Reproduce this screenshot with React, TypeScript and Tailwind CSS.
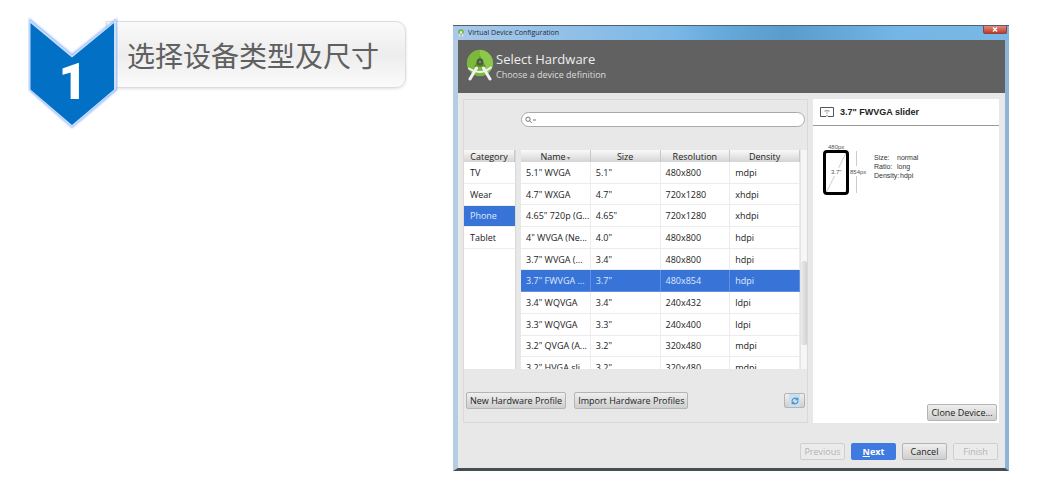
import type { ReactNode } from "react";

const categories = ["TV", "Wear", "Phone", "Tablet"];

const devices = [
  ['5.1" WVGA', '5.1"', "480x800", "mdpi"],
  ['4.7" WXGA', '4.7"', "720x1280", "xhdpi"],
  ['4.65" 720p (G...', '4.65"', "720x1280", "xhdpi"],
  ['4" WVGA (Ne...', '4.0"', "480x800", "hdpi"],
  ['3.7" WVGA (...', '3.4"', "480x800", "hdpi"],
  ['3.7" FWVGA ...', '3.7"', "480x854", "hdpi"],
  ['3.4" WQVGA', '3.4"', "240x432", "ldpi"],
  ['3.3" WQVGA', '3.3"', "240x400", "ldpi"],
  ['3.2" QVGA (A...', '3.2"', "320x480", "mdpi"],
  ['3.2" HVGA sli...', '3.2"', "320x480", "mdpi"],
];

const columns = ["Name", "Size", "Resolution", "Density"];

function PushButton({ children, className = "px-[3px]", disabled = false }: { children: ReactNode; className?: string; disabled?: boolean }) {
  const tone = disabled
    ? "border-[#cfcfcf] bg-[#ebebeb] text-[#b4b4b4]"
    : "border-[#b4b4b4] bg-linear-to-b from-[#efefef] to-[#cfcfcf] text-[#222]";
  return (
    <button type="button" disabled={disabled} className={`flex h-[17px] items-center justify-center rounded-[2px] border whitespace-nowrap ${tone} ${className}`}>
      {children}
    </button>
  );
}

function StepBadge() {
  return (
    <div className="relative z-10 w-[90px] shrink-0">
      <svg viewBox="0 0 90 113" className="block w-full" aria-hidden="true">
        <defs>
          <filter id="glow" x="-10%" y="-10%" width="120%" height="120%">
            <feGaussianBlur stdDeviation="0.8" />
          </filter>
        </defs>
        <path d="M1 2 44 38 89 2V74L44 112 1 74Z" fill="#8db4f5" filter="url(#glow)" />
        <path d="M1.500 4 44 39.500 88 4V73L44 111 1.500 73Z" fill="#cfe0ff" />
        <path d="M2.500 7 44 41.500 86 7V73.500L44 109 2.500 73.500Z" fill="#0270c4" />
      </svg>
      <span className="absolute inset-x-0 top-[47px] text-center font-['Liberation_Sans_Narrow',Roboto,sans-serif] text-[50px] leading-[38px] font-black text-white">1</span>
    </div>
  );
}

function StudioLogo() {
  return (
    <svg viewBox="0 0 28 32" className="h-8 w-7 shrink-0" aria-hidden="true">
      <circle cx="14" cy="14" r="13.200" fill="#7cb83c" />
      <path d="M14 1a13 13 0 0 1 8 23L14 14Z" fill="#8cc84b" />
      <path d="M14 7 8 18h12Z" fill="#5c8f2c" />
      <circle cx="14" cy="13" r="3.400" fill="#4f5a48" />
      <circle cx="14" cy="13" r="1" fill="#7cb83c" />
      <path d="M10.500 19 4 30M17.500 19 24 30" stroke="#f2f2f2" strokeWidth="3" strokeLinecap="round" />
      <path d="M3 19.500Q14 27 25 18.500" stroke="#f2f2f2" strokeWidth="2" fill="none" strokeLinecap="round" />
    </svg>
  );
}

function DeviceDiagram() {
  return (
    <svg viewBox="0 0 46 54" className="h-[54px] w-[46px] shrink-0" fontFamily="Liberation Sans, Arial, sans-serif" fontSize="6" fill="#555">
      <path d="M3 51 24 9M34.500 7V22M34.500 32V49" stroke="#ccc" strokeWidth="1" fill="none" />
      <rect x="2.500" y="7.500" width="23" height="42" rx="2.500" fill="none" stroke="#000" strokeWidth="3" />
      <rect x="9" y="24" width="10" height="8" fill="#fff" />
      <text x="6" y="4.500">480px</text>
      <text x="9" y="30">3.7"</text>
      <text x="28" y="30">854px</text>
    </svg>
  );
}

function HeaderCell({ children }: { children?: ReactNode }) {
  return (
    <th scope="col" className="h-3 border-r border-[#c8c8c8] bg-linear-to-b from-[#fafafa] to-[#d4d4d4] p-0 text-center font-normal">
      {children}
    </th>
  );
}

function CategoryTable() {
  return (
    <div className="h-[219px] w-[52px] shrink-0 overflow-hidden border-r border-[#d8d8d8] bg-white">
      <table className="h-[99px] w-full table-fixed border-separate border-spacing-0 leading-[11px]">
        <thead>
          <tr>
            <HeaderCell>Category</HeaderCell>
          </tr>
        </thead>
        <tbody>
          {categories.map((name) => (
            <tr key={name} className={name === "Phone" ? "bg-[#3874d8] text-[#dfe9fb]" : ""}>
              <td className="border-b border-[#eee] p-0 pl-1.5">{name}</td>
            </tr>
          ))}
        </tbody>
      </table>
    </div>
  );
}

function DeviceTable() {
  return (
    <div className="flex h-[219px] min-w-0 flex-1 overflow-hidden bg-white">
      <div className="min-w-0 flex-1">
        <table className="h-[229px] w-full table-fixed border-separate border-spacing-0 leading-[11px]">
          <thead>
            <tr>
              {columns.map((name) => (
                <HeaderCell key={name}>
                  {name}
                  {name === "Name" && <span className="text-[6px] leading-none text-[#777]"> ▾</span>}
                </HeaderCell>
              ))}
            </tr>
          </thead>
          <tbody>
            {devices.map((row, index) => (
              <tr key={row[0]} className={index === 5 ? "bg-[#3874d8] text-[#dfe9fb]" : ""}>
                {row.map((value, column) => (
                  <td key={column} className={`border-r border-b p-0 pl-[5px] whitespace-nowrap ${index === 5 ? "border-[#5f90e2]" : "border-[#ececec]"}`}>
                    {value}
                  </td>
                ))}
              </tr>
            ))}
          </tbody>
        </table>
      </div>
      <div className="w-[7px] shrink-0 border-l border-[#e4e4e4] bg-[#f6f6f6] pt-[111px]">
        <div className="h-[84px] rounded-[2px] bg-linear-to-r from-[#ececec] to-[#d2d2d2]" />
      </div>
    </div>
  );
}

function HardwarePanel() {
  return (
    <section className="flex min-w-0 flex-1 flex-col border border-[#d9d9d9]">
      <div className="pt-3 pr-0.5 pb-[23px] pl-[57px]">
        <label className="flex h-[15px] items-center rounded-full border border-[#aaa] bg-white px-[3px]">
          <svg viewBox="0 0 12 8" className="h-2 w-3 shrink-0" fill="none" stroke="#777" aria-hidden="true">
            <circle cx="3" cy="3.200" r="2.200" />
            <path d="m4.700 4.900 2 2.100M8 4h3" />
          </svg>
          <input type="search" aria-label="Search devices" className="min-w-0 flex-1 bg-transparent outline-none" />
        </label>
      </div>
      <div className="flex gap-[5px]">
        <CategoryTable />
        <DeviceTable />
      </div>
      <div className="mt-[23px] mb-[13px] flex items-center gap-2 pr-0.5 pl-0.5">
        <PushButton>New Hardware Profile</PushButton>
        <PushButton>Import Hardware Profiles</PushButton>
        <button type="button" aria-label="Refresh" className="ml-auto flex h-[15px] w-[21px] items-center justify-center rounded-[2px] border border-[#b4b4b4] bg-linear-to-b from-[#efefef] to-[#cfcfcf]">
          <span className="flex h-[13px] w-[11px] items-center justify-center bg-[#c9dfef]">
            <svg viewBox="0 0 10 10" className="h-2 w-2" fill="none" stroke="#4d8fc0" strokeWidth="1.400" aria-hidden="true">
              <path d="M1.500 5.500A3.500 3.500 0 0 1 7.500 2.500M8.500 4.500A3.500 3.500 0 0 1 2.500 7.500M8.500.8V3.500H5.800M1.500 9.200V6.500H4.200" />
            </svg>
          </span>
        </button>
      </div>
    </section>
  );
}

function DetailPanel() {
  return (
    <aside className="flex w-[186px] shrink-0 flex-col bg-white font-['Liberation_Sans',Arial,sans-serif] text-[#222]">
      <div className="flex h-[27px] items-center gap-1.5 border-b border-[#999] pl-[7px]">
        <svg viewBox="0 0 14 10" className="h-2.5 w-3.5" fill="none" stroke="#555" aria-hidden="true">
          <path d="M.5.5h13v9H8L7 8.500 6 9.500H.5Z" />
          <path d="M5 5V3.500h4V5M7 3.500V7" stroke="#aaa" />
        </svg>
        <h2 className="text-[9px] leading-3 font-bold text-[#222]">3.7" FWVGA slider</h2>
      </div>
      <div className="mt-[18px] flex gap-1.5 pl-[9px]">
        <DeviceDiagram />
        <dl className="mt-[9px] grid auto-rows-[9px] grid-cols-[23px_auto] content-start text-[7px] leading-[9px] text-[#333]">
          <dt>Size:</dt>
          <dd>normal</dd>
          <dt>Ratio:</dt>
          <dd>long</dd>
          <dt>Density:</dt>
          <dd className="pl-[3px]">hdpi</dd>
        </dl>
      </div>
      <div className="mt-auto flex justify-end pr-0.5 pb-0.5 font-['Open_Sans',sans-serif]">
        <PushButton className="w-[70px]">Clone Device...</PushButton>
      </div>
    </aside>
  );
}

function ConfigurationWindow() {
  return (
    <main className="mt-[25px] mr-[33px] min-w-0 flex-1 font-['Open_Sans','Noto_Sans',sans-serif] text-[9px] leading-3 text-[#222]">
      <div className="border-t border-[#52606c] bg-linear-to-r from-[#a9c9e8] via-[#6db3e6] to-[#79b8e6]">
        <div className="flex h-[14px] items-start justify-between bg-linear-to-r from-transparent from-40% via-[#5a9ccb] via-60% to-transparent to-80% pr-0.5 pl-[5px]">
          <div className="flex h-[14px] items-center gap-1 text-[7px] text-[#1d2c3c]">
            <svg viewBox="0 0 6 8" className="h-2 w-1.5" aria-hidden="true">
              <circle cx="3" cy="3" r="2.800" fill="#78b340" />
              <path d="M3 2 1 7.500M3 2l2 5.500" stroke="#eee" fill="none" />
            </svg>
            Virtual Device Configuration
          </div>
          <button type="button" aria-label="Close" className="flex h-2 w-6 items-center justify-center rounded-b-[2px] border border-t-0 border-[#8c4540] bg-linear-to-b from-[#e08a7c] to-[#c0392b]">
            <svg viewBox="0 0 6 5" className="h-[5px] w-1.5" stroke="#fff" strokeWidth="1.400" aria-hidden="true">
              <path d="m1 .5 4 4m0-4-4 4" />
            </svg>
          </button>
        </div>
      </div>
      <div className="border-r-4 border-b-[3px] border-l-[5px] border-r-[#8fb4d6] border-b-[#454f52] border-l-[#b5cde2] bg-[#e8e8e8]">
        <header className="flex h-[53px] items-start gap-0.5 bg-[#616161] pt-[9px] pl-2 text-[#eee]">
          <StudioLogo />
          <div className="pt-px">
            <h1 className="text-[13px] leading-[18px]">Select Hardware</h1>
            <p className="leading-[13px] text-[#ddd]">Choose a device definition</p>
          </div>
        </header>
        <div className="flex gap-[5px] pt-1.5 pr-1.5 pl-[5px]">
          <HardwarePanel />
          <DetailPanel />
        </div>
        <footer className="flex justify-end gap-1.5 pt-5 pr-[7px] pb-2">
          <PushButton className="w-[45px]" disabled>Previous</PushButton>
          <button type="button" className="h-[17px] w-[45px] rounded-[2px] bg-[#3f7ae0] font-bold text-white">
            <span className="underline">N</span>ext
          </button>
          <PushButton className="w-[45px]">Cancel</PushButton>
          <PushButton className="w-[45px]" disabled>Finish</PushButton>
        </footer>
      </div>
    </main>
  );
}

export default function App() {
  return (
    <div className="flex min-h-screen items-start bg-white">
      <section className="flex w-[453px] shrink-0 items-start pt-4 pl-7">
        <StepBadge />
        <h2 className="-ml-3 mt-[5px] flex h-[67px] w-[300px] items-center rounded-r-[10px] border border-[#ddd] bg-linear-to-b from-[#fafafa] via-[#ededed] to-[#fbfbfb] pl-5 font-['Noto_Sans_CJK_SC',sans-serif] text-[28px] font-normal whitespace-nowrap text-[#606060] shadow-[0_1px_3px_rgba(0,0,0,0.12)]">
          选择设备类型及尺寸
        </h2>
      </section>
      <ConfigurationWindow />
    </div>
  );
}
